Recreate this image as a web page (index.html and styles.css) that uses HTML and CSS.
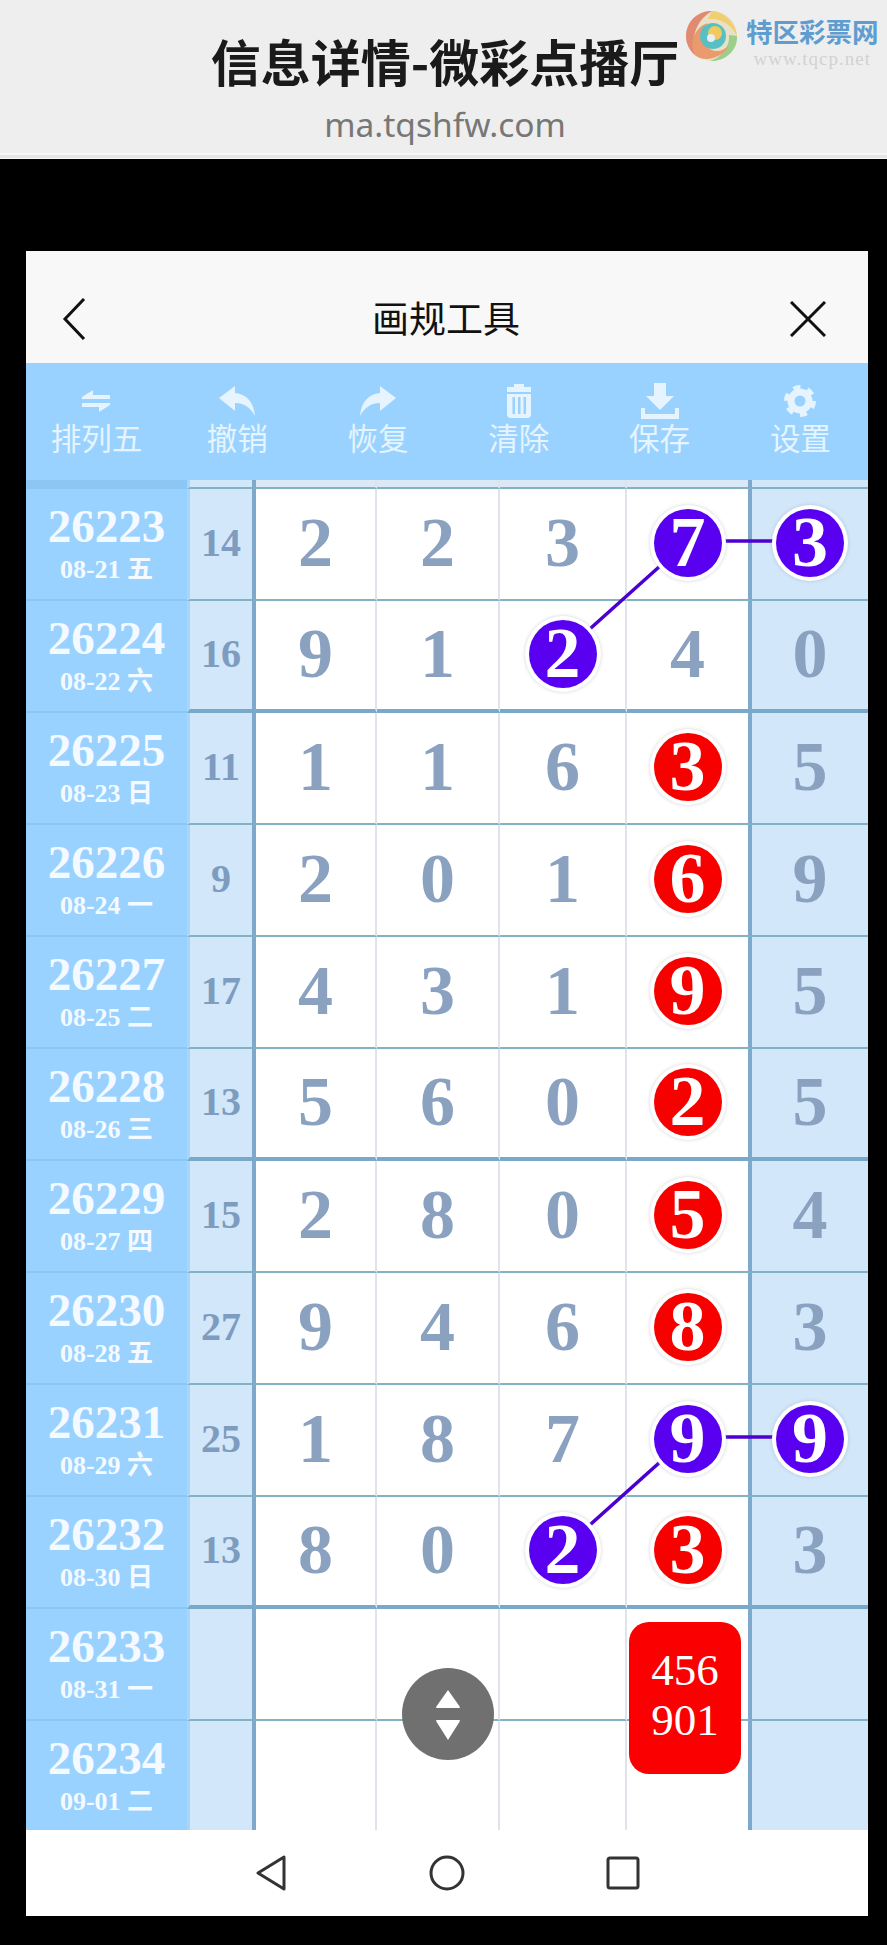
FILE: index.html
```html
<!DOCTYPE html>
<html lang="zh">
<head>
    <meta charset="UTF-8">
    <title>信息详情-微彩点播厅</title>
    <link rel="stylesheet" href="styles.css">
</head>
<body>
    <header class="site-head">
        <h1>信息详情-微彩点播厅</h1>
        <p>ma.tqshfw.com</p>
        <div class="logo">
            <svg width="52" height="54" viewBox="0 0 52 54">
                <circle cx="26" cy="27" r="25" fill="#e9e0c8"/>
                <path d="M26 2A25 25 0 0 0 10 47C4 34 8 12 26 2Z" fill="#e08a70"/>
                <path d="M26 2C40 3 50 15 51 27C46 16 36 9 22 10Z" fill="#f0cf70"/>
                <path d="M51 27C52 42 38 53 24 52C36 48 44 38 43 26Z" fill="#9ccf8a"/>
                <path d="M10 47C2 36 8 18 22 14C14 22 14 34 24 40C30 44 38 42 43 36C38 48 20 54 10 47Z" fill="#ea9a6c"/>
                <circle cx="27" cy="27" r="13" fill="#58c0c4"/>
                <circle cx="29" cy="24" r="7" fill="#f2c95c"/>
                <circle cx="25" cy="29" r="4" fill="#e8eef0"/>
            </svg>
            <div class="logo-text">
                <strong>特区彩票网</strong>
                <span>www.tqcp.net</span>
            </div>
        </div>
    </header>
    <div class="head-rule"></div>

    <main class="card">
        <nav class="title-bar">
            <svg class="nav-icon" width="24" height="42" viewBox="0 0 24 42"><path d="M22 1 3 21l19 20"/></svg>
            <h2>画规工具</h2>
            <svg class="nav-icon" width="36" height="36" viewBox="0 0 36 36"><path d="M1 1l34 34M35 1 1 35"/></svg>
        </nav>

        <div class="toolbar">
            <div class="tool">
                <svg width="30" height="24" viewBox="0 0 30 24"><path d="M1 8 12 1v5h17v4H1zM29 16 18 23v-5H1v-4h28z"/></svg>
                <span>排列五</span>
            </div>
            <div class="tool">
                <svg width="36" height="30" viewBox="0 0 36 30"><path d="M0 12 16 0v7c12 1 19 10 20 23-5-9-11-13-20-13v8z"/></svg>
                <span>撤销</span>
            </div>
            <div class="tool">
                <svg width="36" height="30" viewBox="0 0 36 30"><path d="M36 12 20 0v7C8 8 1 17 0 30c5-9 11-13 20-13v8z"/></svg>
                <span>恢复</span>
            </div>
            <div class="tool">
                <svg width="30" height="34" viewBox="0 0 30 34"><path fill-rule="evenodd" d="M10 0h10v3h7v5H3V3h7zM3 10h24v20a4 4 0 0 1-4 4H7a4 4 0 0 1-4-4zM8.500 13v17h2.500V13zM14 13v17h2.500V13zM19.500 13v17H22V13z"/></svg>
                <span>清除</span>
            </div>
            <div class="tool">
                <svg width="38" height="36" viewBox="0 0 38 36"><path d="M13 0h12v13h8L19 27 5 13h8zM0 25h4v6h30v-6h4v11H0z"/></svg>
                <span>保存</span>
            </div>
            <div class="tool">
                <svg width="34" height="32" viewBox="0 0 34 32"><circle cx="17" cy="16" r="9" fill="none" stroke="#e6f4ff" stroke-width="7"/><circle cx="17" cy="16" r="13.500" fill="none" stroke="#e6f4ff" stroke-width="5" stroke-dasharray="7 7.140"/></svg>
                <span>设置</span>
            </div>
        </div>

        <div class="board">
            <div class="row strip">
                <div class="qi"></div><div class="sum"></div><div class="n"></div><div class="n"></div><div class="n"></div><div class="n"></div><div class="n last"></div>
            </div>

            <div class="row">
                <div class="qi"><b>26223</b><span>08-21 五</span></div><div class="sum">14</div>
                <div class="n">2</div><div class="n">2</div><div class="n">3</div>
                <div class="n"><i class="ball purple">7</i></div><div class="n last"><i class="ball purple">3</i></div>
            </div>
            <div class="row thick">
                <div class="qi"><b>26224</b><span>08-22 六</span></div><div class="sum">16</div>
                <div class="n">9</div><div class="n">1</div><div class="n"><i class="ball purple">2</i></div>
                <div class="n">4</div><div class="n last">0</div>
            </div>
            <div class="row">
                <div class="qi"><b>26225</b><span>08-23 日</span></div><div class="sum">11</div>
                <div class="n">1</div><div class="n">1</div><div class="n">6</div>
                <div class="n"><i class="ball red">3</i></div><div class="n last">5</div>
            </div>
            <div class="row">
                <div class="qi"><b>26226</b><span>08-24 一</span></div><div class="sum">9</div>
                <div class="n">2</div><div class="n">0</div><div class="n">1</div>
                <div class="n"><i class="ball red">6</i></div><div class="n last">9</div>
            </div>
            <div class="row">
                <div class="qi"><b>26227</b><span>08-25 二</span></div><div class="sum">17</div>
                <div class="n">4</div><div class="n">3</div><div class="n">1</div>
                <div class="n"><i class="ball red">9</i></div><div class="n last">5</div>
            </div>
            <div class="row thick">
                <div class="qi"><b>26228</b><span>08-26 三</span></div><div class="sum">13</div>
                <div class="n">5</div><div class="n">6</div><div class="n">0</div>
                <div class="n"><i class="ball red">2</i></div><div class="n last">5</div>
            </div>
            <div class="row">
                <div class="qi"><b>26229</b><span>08-27 四</span></div><div class="sum">15</div>
                <div class="n">2</div><div class="n">8</div><div class="n">0</div>
                <div class="n"><i class="ball red">5</i></div><div class="n last">4</div>
            </div>
            <div class="row">
                <div class="qi"><b>26230</b><span>08-28 五</span></div><div class="sum">27</div>
                <div class="n">9</div><div class="n">4</div><div class="n">6</div>
                <div class="n"><i class="ball red">8</i></div><div class="n last">3</div>
            </div>
            <div class="row">
                <div class="qi"><b>26231</b><span>08-29 六</span></div><div class="sum">25</div>
                <div class="n">1</div><div class="n">8</div><div class="n">7</div>
                <div class="n"><i class="ball purple">9</i></div><div class="n last"><i class="ball purple">9</i></div>
            </div>
            <div class="row thick">
                <div class="qi"><b>26232</b><span>08-30 日</span></div><div class="sum">13</div>
                <div class="n">8</div><div class="n">0</div><div class="n"><i class="ball purple">2</i></div>
                <div class="n"><i class="ball red">3</i></div><div class="n last">3</div>
            </div>
            <div class="row">
                <div class="qi"><b>26233</b><span>08-31 一</span></div><div class="sum"></div>
                <div class="n"></div><div class="n"></div><div class="n"></div><div class="n"></div><div class="n last"></div>
            </div>
            <div class="row">
                <div class="qi"><b>26234</b><span>09-01 二</span></div><div class="sum"></div>
                <div class="n"></div><div class="n"></div><div class="n"></div><div class="n"></div><div class="n last"></div>
            </div>

            <svg class="links" width="842" height="1350" viewBox="0 0 842 1350">
                <path d="M662 61 537 173M662 61H784M662 957 537 1069M662 957H784"/>
            </svg>
            <div class="pick">456<br>901</div>
            <div class="scroll-btn">
                <svg width="28" height="52" viewBox="0 0 28 52"><path d="M14 2 26 19a1 1 0 0 1-1 1H3a1 1 0 0 1-1-1zM14 52 26 33a1 1 0 0 0-1-1H3a1 1 0 0 0-1 1z"/></svg>
            </div>
        </div>

        <div class="sys-bar">
            <svg width="32" height="36" viewBox="0 0 32 36"><path d="M29 2v32L3 18z"/></svg>
            <svg width="36" height="36" viewBox="0 0 36 36"><circle cx="18" cy="18" r="16"/></svg>
            <svg width="34" height="34" viewBox="0 0 34 34"><rect x="2" y="2" width="30" height="30" rx="2"/></svg>
        </div>
    </main>
</body>
</html>
```

FILE: styles.css
```css
* {
    box-sizing: border-box;
}
body {
    margin: 0;
    background: #000;
    font-family: "Noto Sans CJK SC", sans-serif;
}

/* top banner */
.site-head {
    position: relative;
    height: 153px;
    background: #eeeeee;
    text-align: center;
    padding-top: 28px;
}
.site-head h1 {
    margin: 0;
    padding-left: 3px;
    font-size: 50px;
    line-height: 64px;
    font-weight: 700;
    color: #1a1a1a;
}
.site-head p {
    margin: 10px 0 0;
    padding-left: 3px;
    font-family: "Noto Sans", sans-serif;
    font-size: 33.500px;
    line-height: 44px;
    color: #777;
}
.head-rule {
    height: 6px;
    background: #e4e4e4;
    border-top: 2px solid #f6f6f6;
    border-bottom: 1px solid #f6f6f6;
}
.logo {
    position: absolute;
    left: 686px;
    top: 9px;
    display: flex;
    gap: 8px;
}
.logo-text {
    display: flex;
    flex-direction: column;
    align-items: center;
    padding-top: 4px;
}
.logo-text strong {
    font-size: 26.500px;
    line-height: 36px;
    color: #5f9dd0;
}
.logo-text span {
    font-family: "Liberation Serif", serif;
    font-size: 19px;
    line-height: 20px;
    letter-spacing: 1px;
    color: #d2d2d2;
}

/* phone card */
.card {
    width: 842px;
    margin: 92px 0 29px 26px;
    background: #fff;
}
.title-bar {
    height: 112px;
    background: #f8f8f8;
    display: flex;
    align-items: center;
    justify-content: space-between;
    padding: 24px 42px 0 36px;
}
.title-bar h2 {
    margin: -4px 0 0 16px;
    font-size: 37px;
    font-weight: 400;
    color: #111;
    line-height: 50px;
}
.nav-icon {
    fill: none;
    stroke: #111;
    stroke-width: 3;
}

.toolbar {
    height: 117px;
    background: #99d2ff;
    display: grid;
    grid-template-columns: repeat(6, 140.800px);
}
.tool {
    display: flex;
    flex-direction: column;
    align-items: center;
    padding-top: 20px;
    color: #e6f4ff;
    font-size: 30.500px;
    line-height: 36px;
}
.tool svg {
    height: 36px;
    fill: #e6f4ff;
}

/* number grid */
.board {
    position: relative;
    height: 1350px;
    overflow: hidden;
}
.row {
    display: grid;
    grid-template-columns: 161px 69px 121px 123px 127px 125px 116px;
    height: 112px;
}
.row > div {
    border-bottom: 2px solid #83b2c4;
}
.row.thick > div {
    border-bottom: 4px solid #79a8c8;
}
.strip {
    height: 9px;
}
.strip .n {
    background: #dbe9f6;
    padding: 0;
}
.qi {
    background: #99d2ff;
    color: #f4faff;
    display: flex;
    flex-direction: column;
    align-items: center;
    justify-content: center;
    padding-top: 4px;
    font-family: "Liberation Serif", "Noto Sans CJK SC", serif;
}
.row > .qi,
.row.thick > .qi {
    border-bottom: 2px solid #8cc6f4;
}
.strip > .qi {
    background: #8cc6f4;
}
.qi b {
    font-size: 47px;
    line-height: 46px;
}
.qi span {
    font-size: 26px;
    line-height: 41px;
    font-weight: 700;
}
.sum {
    background: #d2e7fa;
    border-left: 3px solid #a6d6fb;
    border-right: 4px solid #7ea8cc;
    color: #7d9cbf;
    font-family: "Liberation Serif", serif;
    font-weight: 700;
    font-size: 40px;
    padding-bottom: 3px;
    display: flex;
    align-items: center;
    justify-content: center;
}
.n {
    border-right: 2px solid #dfe4ea;
    color: #8aa2c0;
    font-family: "Liberation Serif", serif;
    font-weight: 700;
    font-size: 70px;
    padding-bottom: 3px;
    display: flex;
    align-items: center;
    justify-content: center;
}
.n:nth-child(6) {
    border-right: 4px solid #7ea8cc;
}
.n.last {
    background: #d2e7fa;
    border-right: none;
}
.ball {
    position: relative;
    z-index: 2;
    width: 68px;
    height: 68px;
    border-radius: 50%;
    display: flex;
    align-items: center;
    justify-content: center;
    color: #fff;
    font-style: normal;
    font-size: 72px;
    box-shadow: 0 0 0 4px #fff, 0 0 3px 5px rgba(150, 150, 150, 0.25);
}
.ball.purple {
    background: #5a00f0;
}
.ball.red {
    background: #f60000;
}
.links {
    position: absolute;
    left: 0;
    top: 0;
    z-index: 1;
    fill: none;
    stroke: #4c00d0;
    stroke-width: 3.500;
}
.pick {
    position: absolute;
    z-index: 2;
    left: 603px;
    top: 1142px;
    width: 112px;
    height: 152px;
    border-radius: 20px;
    background: #fa0000;
    color: #fff;
    font-family: "Liberation Serif", serif;
    font-size: 45px;
    line-height: 50px;
    text-align: center;
    padding-top: 23px;
}
.scroll-btn {
    position: absolute;
    z-index: 3;
    left: 376px;
    top: 1188px;
    width: 92px;
    height: 92px;
    border-radius: 50%;
    background: #707070;
    display: flex;
    align-items: center;
    justify-content: center;
}
.scroll-btn svg {
    fill: #fff;
}

.sys-bar {
    height: 86px;
    background: #fff;
    display: flex;
    align-items: center;
    padding: 0 228px 0 229px;
    justify-content: space-between;
}
.sys-bar svg {
    fill: none;
    stroke: #333;
    stroke-width: 3;
    stroke-linejoin: round;
}
```
